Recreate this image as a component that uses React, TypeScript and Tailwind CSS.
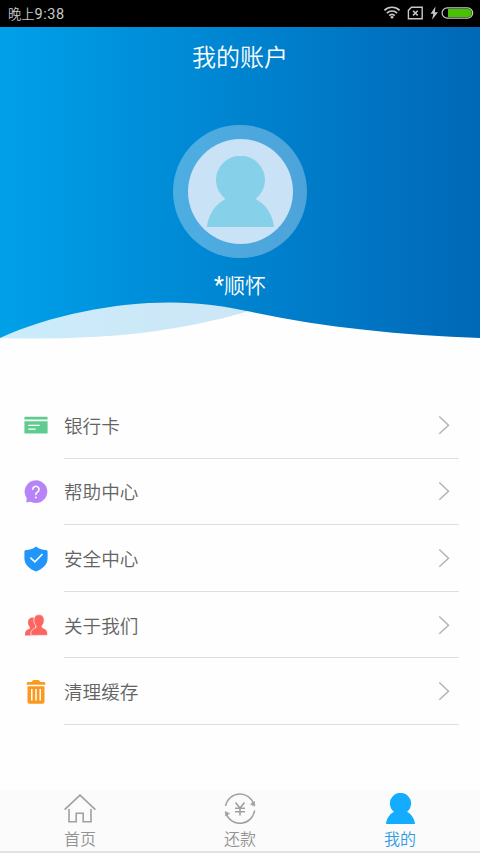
import React from "react";

const BankCardIcon = () => (
  <svg width="24" height="24" viewBox="0 0 24 24">
    <path d="M1.300 3.700h21.400q.9 0 .9.900v1.900H.4V4.600q0-.9.900-.9z" fill="#5fcb8e" />
    <path d="M.4 8.200h23.200v11.500q0 .9-.9.900H1.300q-.9 0-.9-.9z" fill="#5fcb8e" />
    <path d="M4.300 12.300h11.400M4.300 16.200h7.400" stroke="#fff" strokeWidth="1.200" fill="none" />
  </svg>
);

const HelpIcon = () => (
  <svg width="24" height="24" viewBox="0 0 24 24">
    <path d="M12 .2A11.400 11.400 0 1 1 6.800 21.800q-2 .8-4.700.3.800-1.700.5-4.200A11.400 11.400 0 0 1 12 .2z" fill="#b784f8" />
    <path d="M8.800 9.300a3.100 3.100 0 1 1 4.900 2.600c-1.200.8-1.900 1.300-1.900 2.600" stroke="#fff" strokeWidth="1.600" fill="none" strokeLinecap="round" />
    <circle cx="11.800" cy="17.400" r="1" fill="#fff" />
  </svg>
);

const ShieldIcon = () => (
  <svg width="24" height="26" viewBox="0 0 24 26">
    <path d="M12 .5C14.600 2.800 18 3.800 22 4q1.600 0 1.600 1.500v7.100C23.600 19 18 23.300 12 25.600 6 23.300.4 19 .4 12.600V5.500Q.4 4 2 4C6 3.800 9.400 2.800 12 .5z" fill="#2196fa" />
    <path d="M6.400 11.600l4.500 4.200L18.500 8" stroke="#fff" strokeWidth="1.600" fill="none" />
  </svg>
);

const PeopleIcon = () => (
  <svg width="24" height="24" viewBox="0 0 24 24">
    <path d="M8.500 4.500c2.400 0 4.300 1.600 4.300 4.700 0 2-.7 3.600-1.700 4.700v1.500l3 7H1c0-4.500 1-5.200 4.800-6.700v-1.800C4.700 12.800 4 11.200 4 9.200c0-3.100 2-4.700 4.500-4.700z" fill="#fd6560" />
    <path d="M15 1.600c3 0 5.200 1.900 5.200 5.600 0 2.300-.9 4.200-2.100 5.400v2c4 1.600 5.500 2.500 5.500 7.800H6.800c0-4 .5-5.800 5.100-7.800v-2c-1.200-1.200-2.100-3.100-2.100-5.400 0-3.700 2.200-5.600 5.200-5.600z" fill="#fd6560" stroke="#fff" strokeWidth=".7" />
  </svg>
);

const TrashIcon = () => (
  <svg width="24" height="26" viewBox="0 0 24 26">
    <path d="M2.700 5.700V4.600Q2.700 3.100 4.200 3.100h3.600Q8.500 1 10 1h4q1.500 0 2.200 2.100h3.600q1.500 0 1.500 1.500v1.100z" fill="#fa991e" />
    <path d="M3.500 7.200h17v15q0 2.600-2.600 2.600H6.100q-2.600 0-2.600-2.600z" fill="#fa991e" />
    <path d="M7.800 10.100v11.500M12 10.100v11.500M16.200 10.100v11.500" stroke="#fff" strokeWidth="1.500" />
  </svg>
);

const Person = ({ className, fill }: { className: string; fill: string }) => (
  <svg className={className} viewBox="0 0 67 71" preserveAspectRatio="none" fill={fill}>
    <path d="M18.300 43A24.500 24.300 0 1 1 48.700 43C58.500 48 65.800 58.500 67 71H0C1.200 58.500 8.500 48 18.300 43z" />
  </svg>
);

const HomeIcon = () => (
  <svg width="32" height="32" viewBox="0 0 32 32" fill="none" stroke="#a0a0a0" strokeWidth="1.600">
    <path d="M.6 17.600L16 3.100 31.400 17.600" />
    <path d="M5 17.100V29.700h7.200v-8.500h7v8.500H27V17.100" />
  </svg>
);

const RepayIcon = () => (
  <svg width="32" height="32" viewBox="0 0 32 32" fill="none" stroke="#a0a0a0" strokeWidth="1.500">
    <path d="M1.500 14A14.800 14.800 0 0 1 30 12M30.600 18.500A14.800 14.800 0 0 1 2 21.500" />
    <path d="M26.500 12.200l4.300 2-.3-4.700zM5.500 21.500l-4.300-2 .4 4.600z" fill="#a0a0a0" strokeWidth=".6" />
    <path d="M11.500 10.500l4.500 5.600 4.500-5.600M11 16.200h10M11 19.700h10M16 16.100v7.400" strokeWidth="1.600" />
  </svg>
);

const items = [
  { label: "银行卡", Icon: BankCardIcon },
  { label: "帮助中心", Icon: HelpIcon },
  { label: "安全中心", Icon: ShieldIcon },
  { label: "关于我们", Icon: PeopleIcon },
  { label: "清理缓存", Icon: TrashIcon },
];

const StatusBar = () => (
  <div className="flex h-[27px] shrink-0 items-center justify-between bg-black pr-[6px] pl-2">
    <span className="flex items-center font-['Noto_Sans_CJK_SC',sans-serif] text-[13.300px] leading-none font-[350] text-[#c8c8c8]">
      晚上<span className="mt-[3px] font-[Roboto,sans-serif] text-[14.500px] font-normal tracking-[0.500px]">9:38</span>
    </span>
    <svg className="-mt-px" width="92" height="16" viewBox="0 0 92 16" fill="none" stroke="#c8c8c8">
      <path d="M2.400 5.300a11 11 0 0 1 15.200 0M4.900 8.100a7.300 7.300 0 0 1 10.200 0M7.200 10.600a4.200 4.200 0 0 1 5.600 0" strokeWidth="1.700" />
      <path d="M10 14l-1.900-2a2.800 2.800 0 0 1 3.800 0z" fill="#c8c8c8" stroke="none" />
      <path d="M29.500 2.200h10.700v11.500H26.400V5.400z" strokeWidth="1.400" />
      <path d="M31 5.700l4.700 4.700M35.700 5.700L31 10.400" strokeWidth="1.500" />
      <path d="M53.500 1.500l-4.900 7.200h2.800L50 14.700l6-7.500h-3.200z" fill="#c8c8c8" stroke="none" />
      <rect x="60.100" y="2.800" width="30.600" height="10.400" rx="5.200" strokeWidth="1.200" />
      <path d="M66 4h19.800a4 4 0 0 1 0 8H66z" fill="#48c200" stroke="none" />
    </svg>
  </div>
);

export default function App() {
  return (
    <div className="flex h-[853px] w-[480px] flex-col overflow-hidden bg-[#fefefe] font-['Noto_Sans_CJK_SC',sans-serif]">
      <StatusBar />
      <header className="relative flex h-[313px] shrink-0 flex-col items-center bg-linear-to-r from-[#00a0e9] to-[#0068b7] text-white">
        <svg className="absolute inset-0" width="480" height="313" viewBox="0 0 480 313">
          <path d="M0 311C50 288 115 275.500 170 275.500C200 275.500 224 279 248 284.300V313H0z" fill="#fff" fillOpacity=".8" />
          <path d="M0 311C30 312 70 312 120 308.300C170 303.500 215 294.500 248 284.300C320 300 400 308.500 480 311V313H0z" fill="#fefefe" />
        </svg>
        <h1 className="mt-[12px] text-[24px] leading-[34px] font-[350]">我的账户</h1>
        <div className="mt-[51.500px] flex size-[133.500px] shrink-0 items-center justify-center rounded-full bg-white/30">
          <div className="flex size-[105px] justify-center rounded-full bg-[#c9e2f5]">
            <Person className="mt-[17.300px] h-[71px] w-[67px]" fill="#87d0e9" />
          </div>
        </div>
        <p className="mt-[11px] flex text-[21px] leading-[30px] font-[350]">
          <span className="mt-[2px] font-[Roboto,sans-serif] text-[23px] font-normal">*</span>顺怀
        </p>
      </header>
      <main className="mt-[52.100px] flex flex-col">
        {items.map(({ label, Icon }) => (
          <div key={label} className="flex h-[66.600px] items-stretch pr-[21px] pl-6">
            <div className="flex w-10 items-center">
              <Icon />
            </div>
            <div className="flex flex-1 items-center justify-between border-b border-[#dedede] pr-[9px]">
              <span className="text-[18.600px] leading-7 font-[350] text-[#636363]">{label}</span>
              <svg width="12" height="20" viewBox="0 0 12 20" fill="none" stroke="#b4b4b4" strokeWidth="1.500">
                <path d="M1.300 1.500L10.500 10.200 1.300 18.800" />
              </svg>
            </div>
          </div>
        ))}
      </main>
      <nav className="mt-auto flex h-[63px] shrink-0 border-b-2 border-[#e1e1e1] bg-[#fbfbfb] text-[16px] leading-6 font-[350] text-[#939393]">
        <div className="flex flex-1 flex-col items-center pt-[2px]">
          <HomeIcon />
          <span className="mt-[2px]">首页</span>
        </div>
        <div className="flex flex-1 flex-col items-center pt-[2px]">
          <RepayIcon />
          <span className="mt-[2px]">还款</span>
        </div>
        <div className="flex flex-1 flex-col items-center pt-[3px] text-[#2c9be4]">
          <Person className="h-[31px] w-[29px]" fill="#13acff" />
          <span className="mt-[2px]">我的</span>
        </div>
      </nav>
    </div>
  );
}
